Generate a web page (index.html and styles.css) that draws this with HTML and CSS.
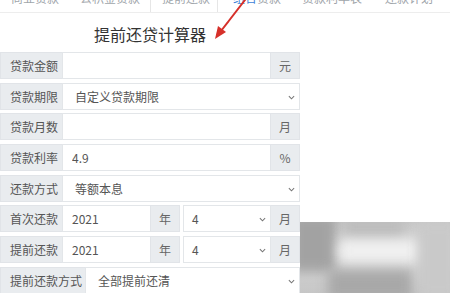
FILE: index.html
```html
<!DOCTYPE html>
<html lang="zh-CN">
<head>
<meta charset="utf-8">
<title>提前还贷计算器</title>
<link rel="stylesheet" href="styles.css">
</head>
<body>
<div class="page">
  <nav class="tabs">
    <span class="tab t1">商业贷款</span>
    <span class="tab t2">公积金贷款</span>
    <span class="tab t3 active">提前还款</span>
    <span class="tab t4"><b class="hl">组合</b>贷款</span>
    <span class="tab t5">贷款利率表</span>
    <span class="tab t6">还款计划</span>
  </nav>

  <div class="calc">
    <h1 class="title">提前还贷计算器</h1>

    <div class="row">
      <span class="lbl">贷款金额</span>
      <input class="inp" type="text" value="">
      <span class="unit">元</span>
    </div>

    <div class="row">
      <span class="lbl">贷款期限</span>
      <div class="sel">自定义贷款期限<svg class="chev" viewBox="0 0 8 5"><path d="M1 1l3 3 3-3"/></svg></div>
    </div>

    <div class="row">
      <span class="lbl">贷款月数</span>
      <input class="inp" type="text" value="">
      <span class="unit">月</span>
    </div>

    <div class="row">
      <span class="lbl">贷款利率</span>
      <input class="inp" type="text" value="4.9">
      <span class="unit">%</span>
    </div>

    <div class="row">
      <span class="lbl">还款方式</span>
      <div class="sel">等额本息<svg class="chev" viewBox="0 0 8 5"><path d="M1 1l3 3 3-3"/></svg></div>
    </div>

    <div class="row">
      <span class="lbl">首次还款</span>
      <input class="inp year" type="text" value="2021">
      <span class="unit">年</span>
      <div class="sel month">4<svg class="chev" viewBox="0 0 8 5"><path d="M1 1l3 3 3-3"/></svg></div>
      <span class="unit">月</span>
    </div>

    <div class="row">
      <span class="lbl">提前还款</span>
      <input class="inp year" type="text" value="2021">
      <span class="unit">年</span>
      <div class="sel month">4<svg class="chev" viewBox="0 0 8 5"><path d="M1 1l3 3 3-3"/></svg></div>
      <span class="unit">月</span>
    </div>

    <div class="row">
      <span class="lbl wide">提前还款方式</span>
      <div class="sel">全部提前还清<svg class="chev" viewBox="0 0 8 5"><path d="M1 1l3 3 3-3"/></svg></div>
    </div>
  </div>

  <svg class="arrow" viewBox="0 0 40 45" width="40" height="45">
    <line x1="35" y1="-2" x2="11" y2="29" />
    <polygon points="5,37 8,24 16,30" />
  </svg>

  <div class="blur">
    <span class="b b1"></span>
    <span class="b b2"></span>
    <span class="b b3"></span>
    <span class="b b4"></span>
    <span class="b b5"></span>
  </div>
</div>
</body>
</html>
```

FILE: styles.css
```css
* { box-sizing: border-box; }

html, body {
  margin: 0;
  padding: 0;
  background: #fff;
}

body {
  font-family: "Noto Sans CJK SC", "Noto Sans", "Liberation Sans", sans-serif;
  color: #495057;
  width: 450px;
  height: 293px;
  overflow: hidden;
}

.page {
  position: relative;
  width: 450px;
  height: 293px;
  overflow: hidden;
}

/* tabs strip, mostly cut off at the top */
.tabs {
  display: flex;
  height: 13px;
  border-bottom: 1px solid #ededed;
  overflow: hidden;
  font-size: 12px;
  color: #a0a5aa;
}

.tab {
  display: block;
  height: 16px;
  line-height: 13px;
  margin-top: -9px;
  white-space: nowrap;
}

.t1 { width: 80px; padding-left: 11px; }
.t2 { width: 70px; padding-left: 0; }
.t3 { width: 68px; padding-left: 11px; }
.t4 { width: 70px; padding-left: 15px; }
.t5 { width: 82px; padding-left: 14px; }
.t6 { width: 80px; padding-left: 15px; }

.active {
  border-left: 1px solid #e6e6e6;
  border-right: 1px solid #e6e6e6;
  height: 23px;
  background: #fff;
}

.hl {
  font-weight: normal;
  color: #3d7fd8;
}

/* calculator */
.calc {
  width: 300px;
}

.title {
  margin: 10px 0 7px;
  height: 22px;
  line-height: 22px;
  font-size: 16px;
  font-weight: normal;
  color: #333;
  text-align: center;
}

.row {
  display: flex;
  height: 27px;
  margin-bottom: 3.7px;
  font-size: 12px;
}

.lbl {
  flex: 0 0 63px;
  display: flex;
  align-items: center;
  padding-left: 9px;
  background: #e9ecef;
  border: 1px solid #e1e4e8;
  color: #555;
  white-space: nowrap;
}

.lbl.wide { flex-basis: 86px; }

.inp {
  flex: 1 1 auto;
  min-width: 0;
  height: 27px;
  margin: 0 0 0 -1px;
  padding: 0 0 0 9px;
  border: 1px solid #e3e6e9;
  background: #fff;
  font-family: inherit;
  font-size: 12px;
  color: #555;
  outline: none;
}

.inp.year { flex: 0 0 89px; }

.unit {
  flex: 0 0 30px;
  display: flex;
  align-items: center;
  justify-content: center;
  margin-left: -1px;
  background: #e9ecef;
  border: 1px solid #e1e4e8;
  color: #666;
  font-size: 12px;
}

.sel {
  position: relative;
  flex: 1 1 auto;
  display: flex;
  align-items: center;
  margin-left: -1px;
  padding-left: 12px;
  border: 1px solid #e3e6e9;
  background: #fff;
  color: #555;
  white-space: nowrap;
}

.sel.month {
  flex: 0 0 88px;
  margin-left: 3px;
  padding-left: 8px;
}

.chev {
  position: absolute;
  right: 4px;
  top: 11px;
  width: 7px;
  height: 5px;
  fill: none;
  stroke: #777;
  stroke-width: 1.2;
}

/* red annotation arrow */
.arrow {
  position: absolute;
  left: 210px;
  top: 2px;
  overflow: visible;
}

.arrow line {
  stroke: #d6302a;
  stroke-width: 2;
  stroke-linecap: round;
}

.arrow polygon {
  fill: #d6302a;
}

/* blurred watermark area bottom-right */
.blur {
  position: absolute;
  left: 300px;
  top: 222px;
  width: 150px;
  height: 71px;
  overflow: hidden;
  background: linear-gradient(180deg, #c8c8c8 0%, #dedede 40%, #c6c6c6 100%);
}

.b {
  position: absolute;
  display: block;
  filter: blur(6px);
}

.b1 { left: -10px; top: -6px; width: 46px; height: 56px; background: #a2a2a2; }
.b2 { left: 44px; top: -6px; width: 60px; height: 22px; background: #bdbdbd; }
.b3 { left: 40px; top: 18px; width: 80px; height: 22px; background: #f0f0f0; }
.b4 { left: 28px; top: 48px; width: 84px; height: 30px; background: #a8a8a8; }
.b5 { left: 118px; top: 0; width: 40px; height: 75px; background: #c9c9c9; }
```
